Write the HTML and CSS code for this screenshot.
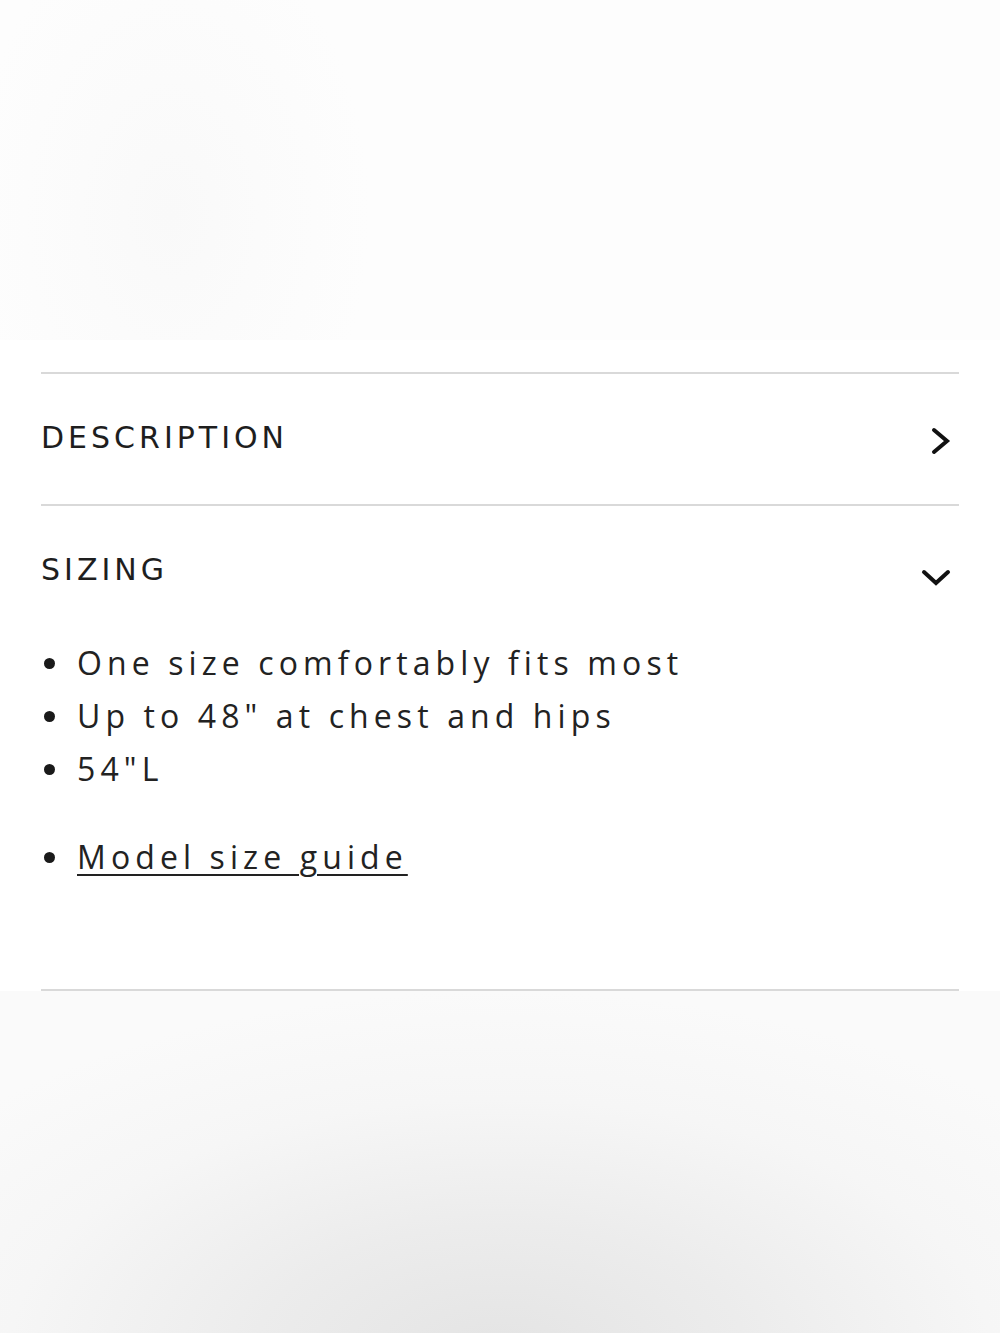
FILE: index.html
```html
<!DOCTYPE html>
<html lang="en">
<head>
<meta charset="utf-8">
<title>Product details</title>
<link rel="stylesheet" href="styles.css">
</head>
<body>
<div class="page">
  <div class="hero"></div>
  <section class="panel">
    <div class="item">
      <div class="item-head">
        <span class="item-title">DESCRIPTION</span>
        <svg class="chev" viewBox="0 0 30 40" width="30" height="40"><polyline points="13,11 26,22 13,33" /></svg>
      </div>
    </div>
    <div class="item">
      <div class="item-head">
        <span class="item-title">SIZING</span>
        <svg class="chev" viewBox="0 0 30 40" width="30" height="40"><polyline points="3,21 15,32 27,21" /></svg>
      </div>
      <div class="item-body">
        <ul class="list">
          <li>One size comfortably fits most</li>
          <li>Up to 48" at chest and hips</li>
          <li>54"L</li>
        </ul>
        <ul class="list list-link">
          <li><a href="#" class="guide">Model size guide</a></li>
        </ul>
      </div>
    </div>
  </section>
  <div class="bottom"></div>
</div>
</body>
</html>
```
FILE: styles.css
```css
html, body {
  margin: 0;
  padding: 0;
  background: #ffffff;
}
.page {
  width: 1000px;
  height: 1333px;
  display: flex;
  flex-direction: column;
  overflow: hidden;
}
.hero {
  height: 340px;
  flex: none;
  background:
    radial-gradient(ellipse 200px 300px at 170px 215px, #f9f9f9 0%, #fbfbfb 45%, #fdfdfd 100%),
    #fdfdfd;
}
.panel {
  flex: none;
  background: #ffffff;
  padding: 32px 41px 0 41px;
}
.item {
  border-top: 2px solid #d9d9d9;
}
.item-head {
  height: 130px;
  display: flex;
  align-items: center;
  justify-content: space-between;
}
.item-title {
  font-family: "DejaVu Sans", sans-serif;
  font-weight: normal;
  font-size: 30px;
  letter-spacing: 4px;
  color: #1e1e1e;
  position: relative;
  top: -2px;
}
.chev {
  display: block;
  margin-right: 8px;
}
.chev polyline {
  fill: none;
  stroke: #111111;
  stroke-width: 4;
  stroke-linecap: round;
  stroke-linejoin: miter;
}
.item-body {
  padding: 0 0 106px 0;
  border-bottom: 2px solid #d9d9d9;
}
.list {
  margin: 0;
  padding: 0 0 0 36px;
  list-style: none;
  font-family: "Open Sans", sans-serif;
  font-size: 32px;
  line-height: 53px;
  letter-spacing: 5.1px;
  color: #222222;
}
.list li {
  position: relative;
}
.list li::before {
  content: "";
  position: absolute;
  left: -33px;
  top: 22px;
  width: 11px;
  height: 11px;
  border-radius: 50%;
  background: #1a1a1a;
}
.list-link {
  margin-top: 35px;
}
.guide {
  color: #222222;
  text-decoration: underline;
  text-decoration-thickness: 2px;
  text-underline-offset: 5px;
}
.bottom {
  flex: 1;
  background:
    radial-gradient(ellipse 700px 360px at 500px 360px, #e4e4e4 0%, #ececec 35%, #f6f6f6 70%, #fafafa 100%);
}
```
